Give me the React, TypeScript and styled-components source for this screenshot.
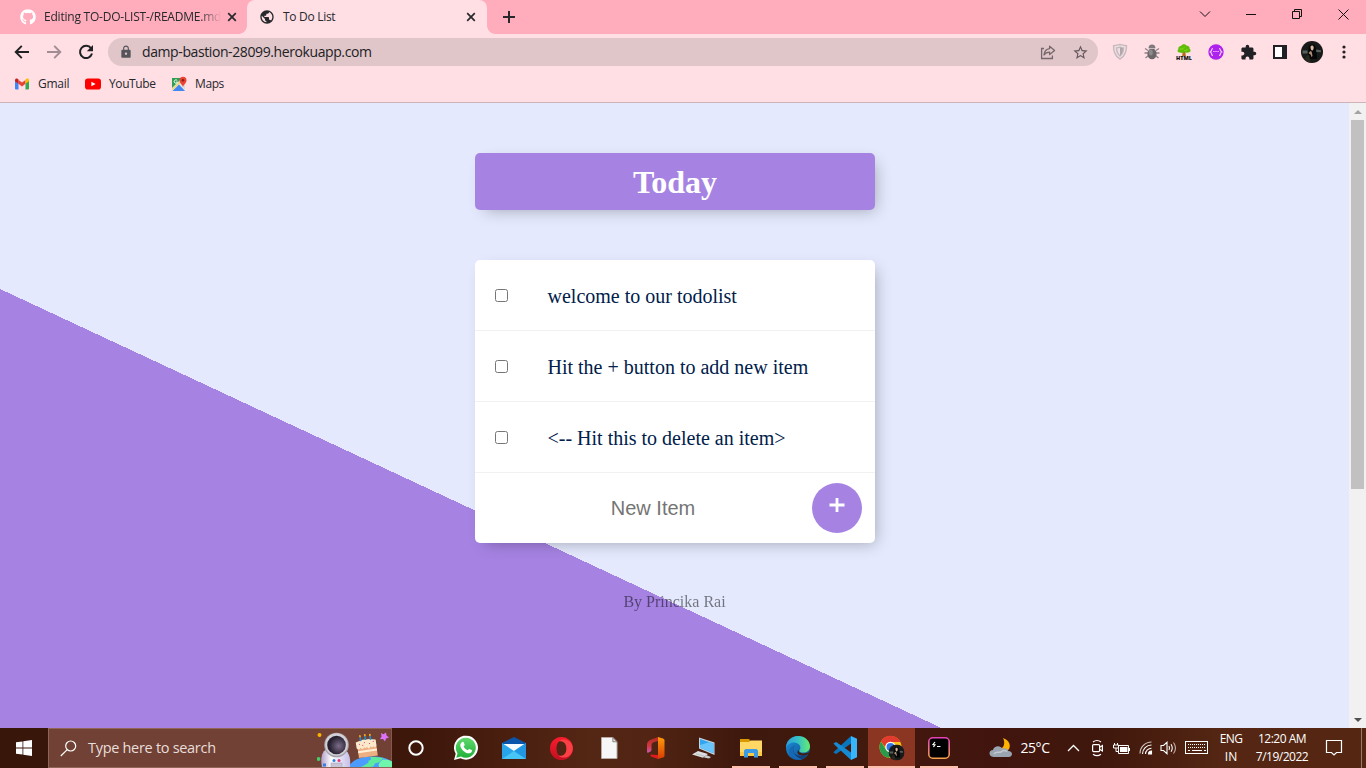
import React from "react";
import styled, { createGlobalStyle, css } from "styled-components";
import { MdExtension, MdLock, MdPublic, MdStarBorder } from "react-icons/md";
import { FaGithub } from "react-icons/fa";

const ui = `"Open Sans", "Noto Sans", sans-serif`;
const serif = `"Liberation Serif", "Times New Roman", serif`;

const GlobalStyle = createGlobalStyle`
  *, *::before, *::after { box-sizing: border-box; }
  body { margin: 0; overflow: hidden; }
  svg { display: block; flex: none; }
`;

const Screen = styled.div`
  width: 1366px;
  height: 768px;
  display: flex;
  flex-direction: column;
  overflow: hidden;
  font-family: ${ui};
`;

const Label = styled.span<{ $size?: number; $spacing?: number }>`
  font-size: ${(p) => p.$size ?? 12}px;
  letter-spacing: ${(p) => p.$spacing ?? 0}px;
  line-height: 18px;
  white-space: nowrap;
  flex: none;
`;

/* ---------- Browser: tab strip ---------- */

const TabStrip = styled.div`
  height: 34px;
  flex: none;
  display: flex;
  align-items: stretch;
  background: #ffadbc;
  color: #26282c;
`;

const Tab = styled.div<{ $active?: boolean }>`
  position: relative;
  display: flex;
  align-items: center;
  width: ${(p) => (p.$active ? 240 : 247)}px;
  padding: 0 ${(p) => (p.$active ? 8 : 7)}px 0 ${(p) => (p.$active ? 12 : 20)}px;
  ${(p) =>
    p.$active &&
    css`
      background: #ffdee4;
      border-radius: 8px 8px 0 0;
      &::before,
      &::after {
        content: "";
        position: absolute;
        bottom: 0;
        width: 8px;
        height: 8px;
      }
      &::before {
        left: -8px;
        background: radial-gradient(circle at 0 0, transparent 7.5px, #ffdee4 8px);
      }
      &::after {
        right: -8px;
        background: radial-gradient(circle at 100% 0, transparent 7.5px, #ffdee4 8px);
      }
    `}
`;

const TabTitle = styled.span<{ $fade?: boolean; $spacing: number }>`
  flex: 1;
  margin: 0 0 0 8px;
  white-space: nowrap;
  font-size: 12px;
  line-height: 18px;
  letter-spacing: ${(p) => p.$spacing}px;
  ${(p) => p.$fade && css`mask-image: linear-gradient(90deg, #000 156px, transparent 177px);`}
`;

const IconCell = styled.div<{ $w: number }>`
  width: ${(p) => p.$w}px;
  flex: none;
  display: flex;
  align-items: center;
  justify-content: center;
`;

const CaptionButtons = styled.div`
  display: flex;
  margin-left: auto;
  height: 28px;
  color: #111;
`;

/* ---------- Browser: toolbar and bookmarks ---------- */

const Toolbar = styled.div`
  height: 36px;
  flex: none;
  display: flex;
  align-items: center;
  padding: 0 6px;
  background: #ffdee4;
  color: #202124;
`;

const AddressBar = styled.div`
  width: 990px;
  height: 28px;
  margin: 0 6px;
  padding: 0 2px 0 11px;
  border-radius: 14px;
  display: flex;
  align-items: center;
  background: #e0c5c9;
`;

const AddressText = styled(Label)`
  flex: 1;
  margin-left: 9px;
`;

const Bookmarks = styled.div`
  height: 33px;
  flex: none;
  display: flex;
  align-items: flex-start;
  padding: 5px 14px;
  background: #ffdee4;
  border-bottom: 1px solid #ceb3b9;
  color: #26282c;
`;

const Bookmark = styled.div<{ $w: number }>`
  width: ${(p) => p.$w}px;
  display: flex;
  align-items: center;
  gap: 8px;
`;

/* ---------- Page ---------- */

const Viewport = styled.div`
  height: 625px;
  flex: none;
  display: flex;
`;

const Page = styled.main`
  width: 1349px;
  background: #e4e9fd linear-gradient(25deg, #a683e3 50%, #e4e9fd 50%) 0 0 / 1349px 1001px no-repeat;
  font-family: ${serif};
  overflow: hidden;
`;

const Box = styled.section`
  width: 400px;
  margin: 50px auto;
  border-radius: 5px;
  background: #fff;
  box-shadow: 5px 5px 15px -5px rgba(0, 0, 0, 0.3);
`;

const Heading = styled(Box)`
  height: 57px;
  padding: 11px 9px 9px 10px;
  background: #a683e3;
  text-align: center;
`;

const Title = styled.h1`
  margin: 0;
  font-size: 32px;
  line-height: 37px;
  color: #fff;
`;

const Item = styled.label`
  height: 71px;
  display: flex;
  align-items: center;
  border-bottom: 1px solid #f1f1f1;
`;

const Check = styled.input`
  width: 13px;
  height: 13px;
  margin: 20px;
`;

const ItemText = styled.p`
  margin: 0;
  padding: 21px 20px 19px 20px;
  font-size: 20px;
  line-height: 23px;
  color: #00204a;
`;

const NewItem = styled.form`
  height: 70px;
  display: flex;
  align-items: center;
`;

const NewItemInput = styled.input`
  width: 337px;
  height: 60px;
  padding: 0 0 0 20px;
  border: 0;
  outline: 0;
  background: transparent;
  text-align: center;
  font: 20px "Liberation Sans", Arial, sans-serif;
  &::placeholder { color: #757575; opacity: 1; }
`;

const AddButton = styled.button`
  width: 50px;
  height: 50px;
  border: 0;
  border-radius: 50%;
  padding: 0 0 6px;
  display: flex;
  align-items: center;
  justify-content: center;
  background: #a683e3;
  color: #fff;
`;

const Footer = styled.footer`
  text-align: center;
  font-size: 16px;
  line-height: 18px;
  color: #000;
  opacity: 0.5;
`;

const Scrollbar = styled.div`
  width: 17px;
  display: flex;
  flex-direction: column;
  align-items: center;
  background: #f1f1f1;
`;

const ScrollArrow = styled.div`
  height: 17px;
  display: flex;
  align-items: center;
`;

const ScrollThumb = styled.div`
  width: 13px;
  height: 369px;
  margin-bottom: auto;
  background: #c1c1c1;
`;

/* ---------- Taskbar ---------- */

const Taskbar = styled.div`
  height: 40px;
  flex: none;
  display: flex;
  background: linear-gradient(90deg, #39160a 0, #3e170b 420px, #542614 590px, #512413 650px, #3e180d 745px, #421a0d 850px, #41150e 990px, #3f170c 1100px, #542613 1220px, #552713 1366px);
  color: #fff;
`;

const SearchBox = styled.div`
  width: 344px;
  display: flex;
  align-items: center;
  padding-left: 11px;
  background: #704134;
  border: 1px solid #8e6558;
  border-right-color: #82594c;
  color: #e9dedb;
`;

const SearchLabel = styled(Label)`
  margin-left: 11px;
  width: 229px;
`;

const AppCell = styled.div<{ $w: number; $open?: boolean; $active?: boolean }>`
  width: ${(p) => p.$w}px;
  flex: none;
  display: flex;
  align-items: center;
  justify-content: center;
  ${(p) =>
    p.$open &&
    css`background: linear-gradient(#ffbfad, #ffbfad) center bottom / 38px 2px no-repeat;`}
  ${(p) =>
    p.$active &&
    css`background: linear-gradient(#ffbfad, #ffbfad) center bottom / 100% 2px no-repeat, #8b3523;`}
`;

const Tray = styled.div`
  margin-left: auto;
  width: 377px;
  display: flex;
  align-items: center;
`;

const Stack = styled.div<{ $w: number }>`
  width: ${(p) => p.$w}px;
  display: flex;
  flex-direction: column;
  align-items: center;
`;

const ShowDesktop = styled.div`
  width: 5px;
  height: 40px;
  margin-left: auto;
  border-left: 1px solid #967a6d;
`;

/* ---------- Icons ---------- */

const line = { fill: "none", stroke: "currentColor" } as const;

const CloseTab = () => (
  <svg width="16" height="16" {...line} strokeWidth="1.7">
    <path d="M4.2 4.2l7.6 7.6M11.8 4.2l-7.6 7.6" />
  </svg>
);
const PlusTab = () => (
  <svg width="16" height="16" {...line} strokeWidth="2">
    <path d="M8 2v12M2 8h12" />
  </svg>
);
const Arrow = ({ flip }: { flip?: boolean }) => (
  <svg width="16" height="16" {...line} strokeWidth="1.9" color={flip ? "#a38d94" : "#202124"}>
    <path d={flip ? "M1 8h13M8.2 1.9L14.3 8l-6.1 6.1" : "M15 8H2M7.8 1.9L1.7 8l6.1 6.1"} />
  </svg>
);
const Reload = () => (
  <svg width="16" height="16">
    <path d="M13.1 4.4A6.1 6.1 0 1 0 14 9.6" {...line} strokeWidth="2" />
    <path d="M15 1v6.2H8.8z" fill="currentColor" />
  </svg>
);
const Share = () => (
  <svg width="16" height="16" {...line} strokeWidth="1.3" color="#75686d">
    <path d="M4 4.5H1.6v10h10.8v-3" />
    <path d="M9.6 2.2l5 4.2-5 4.2V8.2C7 8.2 5.3 9 4 11c.3-3.4 2.1-6 5.600-6.400z" strokeLinejoin="round" />
  </svg>
);
const Shield = () => (
  <svg width="16" height="18" fill="none" stroke="#c5b9bd" strokeWidth="1.4">
    <path d="M1.5 2.8C5 2.5 6.5 1.7 8 1.5c1.5.2 3 1 6.5 1.300.1 6.200-1.800 10.600-6.500 13.400C3.300 13.400 1.400 9 1.500 2.800z" fill="#f0dfe3" />
    <path d="M4.500 5c1.500-.1 2.500-.4 3.500-.8 1 .4 2 .7 3.500.8-.1 4-1.200 6-3.500 8-2.300-2-3.400-4-3.500-8z" />
    <path d="M8 4.500V13c2-1.800 3-4 3-7.700z" fill="#b1a7aa" stroke="none" />
  </svg>
);
const Bug = () => (
  <svg width="16" height="16">
    <path d="M1 4.500l3 2M15 4.500l-3 2M.5 9h4M15.500 9h-4M1.500 14l3-2.500M14.500 14l-3-2.500" fill="none" stroke="#8e8386" strokeWidth="1.3" />
    <ellipse cx="8" cy="9.8" rx="4.6" ry="5.5" fill="#6b6668" />
    <ellipse cx="6.8" cy="8.5" rx="2" ry="3" fill="#8e898b" />
    <path d="M4.500 4.200C4.600 1.600 6 .5 8 .5s3.400 1.100 3.500 3.700z" fill="#807a7c" />
    <path d="M5 4.500h6" stroke="#c5bdc0" />
  </svg>
);
const HtmlTree = () => (
  <svg width="16" height="17" viewBox="0 0 16 17">
    <path d="M6.800 7h2.400l.6 5H6.200z" fill="#b16b17" />
    <path d="M4 8.500C1.500 8.800.8 6.500 2.400 5.300 1.800 3 3.800 1.700 5 2 6-.2 9.500-.3 10.700 1.800c2-.4 3.400 1.400 2.800 3 2 1.200 1 3.900-1.500 3.700-1.500.6-2.500.3-3.500-.5C7 9 5.500 9.200 4 8.500z" fill="#5fbd08" />
    <path d="M4 5c2 .8 3-.4 4.500-1.800M8.500 6.500c1.500 0 2.500-.5 3-1.500" stroke="#8be01a" fill="none" />
    <text x="0" y="16" textLength="16" lengthAdjust="spacingAndGlyphs" fontFamily="Open Sans, sans-serif" fontWeight="800" fontSize="5" fill="#111">HTML</text>
  </svg>
);
const PurpleBadge = () => (
  <svg width="16" height="16" fill="none" stroke="#f3d5ff" strokeWidth="1.2">
    <circle cx="8" cy="8" r="7.700" fill="#ae22ee" stroke="none" />
    <path d="M5 4.500c-2 0-.7 2.500-2.700 3.500 2 1 .7 3.500 2.700 3.500M11 4.500c2 0 .7 2.500 2.700 3.500-2 1-.7 3.500-2.700 3.500" />
    <path d="M5.300 7.500h1.200M7.400 7.500h1.200M9.500 7.500h1.200" />
  </svg>
);
const SidePanel = () => (
  <svg width="14" height="14">
    <path d="M1 1h12v12H1z" {...line} strokeWidth="2" />
    <path d="M9 0h5v14H9z" fill="currentColor" />
    <path d="M2 2h7v10H2z" fill="#fff" />
  </svg>
);
const Avatar = ({ size }: { size: number }) => (
  <svg width={size} height={size} viewBox="0 0 22 22">
    <circle cx="11" cy="11" r="11" fill="#171a18" />
    <path d="M1.500 9.500h5v3h-5zM15 8.500l5 .8v2l-5-.3z" fill="#555f5b" />
    <path d="M7.500 7.200C7.500 2.500 14.500 2 14.800 7c.3 4 1.500 7 1.300 11H7c-.5-4 .5-7 .5-10.800z" fill="#050607" />
    <path d="M9.500 5.500c1-1.500 3-1 3.200.8.1 2-.6 3.200-1.500 3.300-1 .1-1.800-2-1.700-4.100z" fill="#d9b9a0" />
    <path d="M7.500 12l2-2 1.200.8.8 4-.8 1.500-1-2.500z" fill="#b08f77" />
    <path d="M4 18c1-3 2-4 4-4l2 7.800C7.500 21.800 5.300 20 4 18z" fill="#29281e" />
  </svg>
);
const Dots = () => (
  <svg width="4" height="14" fill="#202124">
    <circle cx="2" cy="2" r="1.600" /><circle cx="2" cy="7" r="1.600" /><circle cx="2" cy="12" r="1.600" />
  </svg>
);
const Gmail = () => (
  <svg width="16" height="12" viewBox="0 0 16 12">
    <path d="M1 2.200L4.500 4.800V11.500H2a1 1 0 0 1-1-1z" fill="#4285f4" />
    <path d="M11.500 4.800L15 2.200v8.300a1 1 0 0 1-1 1h-2.500z" fill="#34a853" />
    <path d="M4.500 1.900L8 4.600l3.500-2.700v3.900L8 8.500 4.500 5.800z" fill="#ea4335" />
    <path d="M1 2.200C1 .7 2.600 0 3.800.9l.7.6v4.300L1 3.200z" fill="#c5221f" />
    <path d="M15 2.200C15 .7 13.400 0 12.200.9l-.7.6v4.300L15 3.200z" fill="#fbbc04" />
  </svg>
);
const YouTube = () => (
  <svg width="16" height="12"><rect y=".5" width="16" height="11" rx="2.800" fill="#f00" /><path d="M6.400 3.700L10.600 6l-4.200 2.300z" fill="#fff" /></svg>
);
const Maps = () => (
  <svg width="15" height="16">
    <path d="M0 2h13v13H0z" fill="#e5e4df" />
    <path d="M0 2h10L0 12z" fill="#2f9e50" />
    <path d="M7 8.500L13 15H.5z" fill="#4285f4" />
    <path d="M.5 13.500L11 3" stroke="#f6d35a" strokeWidth="1.300" />
    <path d="M9.500 8.500l3.500 5V7z" fill="#dad9d4" />
    <path d="M11 11C10.300 8.500 7.500 7.300 7.500 4.300a3.500 3.500 0 0 1 7 0c0 3-2.800 4.200-3.500 6.700z" fill="#ea4335" />
    <circle cx="11" cy="4.200" r="1.300" fill="#8e1d16" />
    <path d="M5.300 4.600a1.700 1.700 0 1 0 .2 1.500H4" fill="none" stroke="#fff" strokeWidth=".9" />
  </svg>
);

const WindowsLogo = () => (
  <svg width="16" height="16" fill="#fff"><path d="M0 2.300L6.500 1.400v6.200H0zM7.300 1.300L16 0v7.600H7.300zM0 8.400h6.500v6.200L0 13.700zM7.300 8.400H16V16l-8.700-1.300z" /></svg>
);
const SearchIcon = () => (
  <svg width="17" height="17" fill="none" stroke="#fff" strokeWidth="1.200"><circle cx="10.700" cy="6" r="5" /><path d="M7.200 9.600L.8 16" /></svg>
);
const Astronaut = () => (
  <svg width="75" height="38" viewBox="0 0 75 38">
    <defs>
      <linearGradient id="suit"><stop stopColor="#b3a0cc" /><stop offset=".35" stopColor="#fff" /><stop offset="1" stopColor="#c6bee9" /></linearGradient>
      <radialGradient id="visor" cx=".62" cy=".55"><stop stopColor="#7c6d8b" /><stop offset="1" stopColor="#27212f" /></radialGradient>
    </defs>
    <path d="M32 38c2-6 10-10 21-10.500 9-.5 17 1.500 22 5V38z" fill="#4c9bff" />
    <path d="M53 28c6 0 11 0 14 1.500-5 1.500-2 4-8 4.500-3 1 0 4-6 4H44c5-3 9-4 7-6 3-1 4-2 2-4z" fill="#5dea9c" />
    <path d="M65 31c4-1 7 0 10 1.500V38H62c-1-3 0-4 3-7z" fill="#70f5ac" />
    <path d="M5 38c-2-9 0-17 6-18h15c6 2 8 9 7 18z" fill="url(#suit)" />
    <circle cx="19.500" cy="16" r="12.300" fill="#a3a0a9" />
    <circle cx="19.500" cy="15.500" r="11.300" fill="#d2cfd6" />
    <circle cx="19.500" cy="16" r="9.300" fill="url(#visor)" />
    <rect x="14" y="34" width="11" height="5" fill="#c7c4d7" stroke="#a9a5bd" strokeWidth=".6" />
    <circle cx="17" cy="31.500" r="1.500" fill="#2f81df" /><circle cx="22" cy="31.500" r="1.500" fill="#e93672" />
    <path d="M6 34.500h3v3H6z" fill="#2f81df" />
    <circle cx="2.500" cy="6" r="2" fill="#ffb100" /><circle cx="1.500" cy="30" r="1.900" fill="#42cf6a" />
    <g transform="rotate(-8 49 18) translate(.5 1)">
      <path d="M40 12h19v15H40z" fill="#eeb083" />
      <path d="M40 20h19v2H40z" fill="#fff0da" />
      <path d="M39 11q10-3.500 20 0v6q-1.500 3-3 0-1.500 2-3 0-2 4-3.500 0-1.500 2-3 0-1.500 3-3.500 0-2 3-4 0z" fill="#fbe9cc" />
      <path d="M44 6.500v4M49 6v4M54 6.500v4" stroke="#258ccc" strokeWidth="1.600" />
      <path d="M44 4.500v2M49 4v2M54 4.500v2" stroke="#ffb11b" strokeWidth="1.600" />
      <path d="M42 13.500h1M47 12.500h1M52 14h1M56 12.500h1M45 15h1" stroke="#e8456e" />
    </g>
    <path d="M64 4l2.500 1.200L69 3.500l.5 3 2.500 2-3 1-1 3-2-2.500-3 .3 1.500-2.800z" fill="#dd71fb" />
  </svg>
);
const Cortana = () => (
  <svg width="18" height="18"><circle cx="8" cy="9" r="6.700" fill="none" stroke="#fff" strokeWidth="2" /></svg>
);
const WhatsApp = () => (
  <svg width="26" height="26" viewBox="0 0 26 26">
    <defs><linearGradient id="wa" x2="0" y2="1"><stop stopColor="#61d86e" /><stop offset="1" stopColor="#20b038" /></linearGradient></defs>
    <path d="M1 25l1.700-6.200A12 12 0 1 1 7.500 23.300z" fill="#fff" />
    <path d="M3.300 22.700l1.200-4.400A10 10 0 1 1 8 21.500z" fill="url(#wa)" />
    <path d="M9.200 7c.5-.4 1.300-.3 1.500.3l1 2.400c.1.500-.8 1.400-1.100 1.800.9 1.800 2.300 3 4 3.800.5-.5 1.300-1.600 1.700-1.400l2.500 1.200c.7.400-.1 2.500-1.500 3-4 1.500-9.800-4-10-7.700-.1-1.500.9-2.700 1.900-3.400z" fill="#fff" />
  </svg>
);
const Mail = () => (
  <svg width="24" height="22"><path d="M0 6L12 0l12 6v6H0z" fill="#0a55ab" /><path d="M2 7h20v9H2z" fill="#f7fbff" /><path d="M0 6l12 8L24 6v16H0z" fill="#28a5ea" /><path d="M0 22L12 14 24 22z" fill="#46c5f6" /><path d="M12 14L24 6v16z" fill="#1c8dde" opacity=".6" /></svg>
);
const Opera = () => (
  <svg width="23" height="23" viewBox="0 0 23 23">
    <defs><linearGradient id="op" x2="0" y2="1"><stop stopColor="#ff1b2d" /><stop offset="1" stopColor="#c01022" /></linearGradient></defs>
    <path fillRule="evenodd" d="M11.500 0a11.500 11.500 0 1 0 0 23 11.500 11.500 0 1 0 0-23zm0 3.500c2.800 0 5 3.500 5 8s-2.200 8-5 8-5-3.500-5-8 2.200-8 5-8z" fill="url(#op)" />
    <path d="M8 4.500c5-4 10.500-1.500 12.500.8 3 3.800 3 8.700 0 12.400-2 2.300-7.500 4.800-12.500.8 5 1.500 8.500-2 8.500-7s-3.500-8.500-8.500-7z" fill="#fa4045" />
  </svg>
);
const FileIcon = () => (
  <svg width="17" height="22"><path d="M.5.5h11.300l4.200 4.200V21.500H.5z" fill="#f7f7f7" stroke="#b5a9a4" /><path d="M11.800.5v4.300H16z" fill="#ddd" stroke="#77706d" strokeWidth=".8" /></svg>
);
const Office = () => (
  <svg width="18" height="22" viewBox="0 0 18 22">
    <defs><linearGradient id="of1" x2="0" y2="1"><stop stopColor="#b02a1c" /><stop offset=".6" stopColor="#d23a49" /><stop offset="1" stopColor="#ca5ab4" /></linearGradient><linearGradient id="of2" x2="0" y2="1"><stop stopColor="#ff9b0b" /><stop offset="1" stopColor="#d83b01" /></linearGradient></defs>
    <path d="M11 0L3 3Q0 4.500 0 7v7.500q.2 1.800 1.500 1l2-1q1-.6 1-2V8q0-2 2-2.800L11 4z" fill="url(#of1)" />
    <path d="M4 17.500L11 18v4l-7-2.500q-1.500-1.300 0-2z" fill="#dd1d1d" />
    <path d="M11 0l5 1.400q1.500.5 1.500 2.200v14.800q0 1.700-1.500 2.200L11 22z" fill="url(#of2)" />
  </svg>
);
const RemotePc = () => (
  <svg width="23" height="22"><path d="M7 .5l15.500 5V18L7 11.500z" fill="#c9d4dd" /><path d="M8 2l13.500 4.500v9.800L8 10.800z" fill="#32a5ef" /><path d="M8 8l10-3 3.500 2v9L8 10.800z" fill="#69c4fb" /><path d="M6 14l10 3-5 3.800L0 17.500z" fill="#dcdedf" /><path d="M4 16.800l8 2.300" stroke="#a4abb0" fill="none" strokeWidth=".6" /><path d="M14 18l5 2-2 1.500-5-1z" fill="#c8ced2" /></svg>
);
const Explorer = () => (
  <svg width="22" height="19"><path d="M0 0h9l1 1.500V5H0z" fill="#d99800" /><path d="M0 3h9l1.500-1.500H22V17H0z" fill="#ffd765" /><path d="M0 13h22v4H0z" fill="#fbc944" /><path d="M4 18.500V11.500L5.500 10h11l1.500 1.500v7h-4V14H8v4.500z" fill="#3b9be5" /></svg>
);
const Edge = () => (
  <svg width="24" height="24" viewBox="0 0 24 24">
    <defs><linearGradient id="ed1"><stop stopColor="#2d9ddd" /><stop offset=".5" stopColor="#35c1c5" /><stop offset="1" stopColor="#66eb6e" /></linearGradient><linearGradient id="ed2" x2="1" y2="1"><stop stopColor="#1a93dc" /><stop offset="1" stopColor="#114a8b" /></linearGradient></defs>
    <circle cx="12" cy="12" r="12" fill="url(#ed2)" />
    <path d="M0 12C0 5.200 5.300 0 12 0c7 0 12 5 12 10.400 0 3.900-3.200 6.200-6.500 6.200-3.100 0-4.600-1.200-4.100-2.200 3-4-1-7.900-5.400-7.900C4 6.500.6 9 0 12z" fill="url(#ed1)" />
    <path d="M8.800 9.600C5.200 13.500 8 20 14.500 20c3.500 0 5.800-1 8-3.500C20 21 16 24 12 24 5 24 2 16.500 8.800 9.600z" fill="#123f7c" />
    <path d="M13 14c-1.500 2.500 3.500 5 10.500 2.300l.5 1-4 1.700c-7 2-11-2.700-7-5z" fill="#431a0d" />
    <path d="M8.800 9.600C5.200 13.500 8 21 16 23.200 8 26 1 19 3.500 13.500c1-2.300 3-3.700 5.300-3.900z" fill="#1768b4" />
  </svg>
);
const VSCode = () => (
  <svg width="24" height="24" viewBox="0 0 24 24"><path d="M1.500 15.200L18 0v7.400L3.200 18 .5 16.700z" fill="#0875bd" /><path d="M1.500 8.800L18 24v-7.400L3.200 6 .5 7.300z" fill="#168ad3" /><path d="M18 0l6 2.800V21.200L18 24z" fill="#38b5fb" /></svg>
);
const ChromeProfile = () => (
  <svg width="26" height="26" viewBox="0 0 26 26">
    <circle cx="11.500" cy="12" r="11" fill="#fbc116" />
    <path d="M2 6.500A11 11 0 0 1 21.500 7H11.500a5 5 0 0 0-4.700 3.300L6 12z" fill="#e33b2e" />
    <path d="M2 6.500l5 8.200a5 5 0 0 0 5.500 2.200L10 23A11 11 0 0 1 2 6.500z" fill="#299a4a" />
    <circle cx="11.500" cy="12" r="5.200" fill="#fff" /><circle cx="11.500" cy="12" r="4" fill="#3278e8" />
    <g transform="translate(9.500 9.500)"><Avatar size={16} /></g>
  </svg>
);
const Terminal = () => (
  <svg width="22" height="22">
    <defs><linearGradient id="tm" x2="0" y2="1"><stop stopColor="#e543b8" /><stop offset="1" stopColor="#f5a04d" /></linearGradient></defs>
    <rect x=".8" y=".8" width="20.4" height="20.4" rx="4" fill="#000" stroke="url(#tm)" strokeWidth="1.6" />
    <path d="M7 5L5 7.500l2 .3L5.500 10M9 9.500h3.500" stroke="#fff" strokeWidth="1.200" fill="none" />
  </svg>
);
const Weather = () => (
  <svg width="24" height="20" viewBox="0 0 24 20">
    <path d="M14 0c6 2 8 7 6 11-2 3-7 3-9 0 4-1 5.500-6 3-11z" fill="#ffb300" />
    <path d="M4.500 19C-1 18.500-.5 12 4 12c1-4.500 7.500-5 9.500-1.200C17 9.500 19 11 19.200 13c5 0 5 6 .5 6z" fill="#9ba4b1" />
    <path d="M5 16c2-3 5-1 7-2 2-2 4-2 6-.5" stroke="#c5c9cf" strokeWidth="1.500" fill="none" />
  </svg>
);
const ChevronUp = () => (
  <svg width="13" height="8" {...line} strokeWidth="1.3"><path d="M1 7l5.500-5.500L12 7" /></svg>
);
const MeetNow = () => (
  <svg width="14" height="18" {...line} strokeWidth="1.2"><rect x="1.6" y="5.6" width="7" height="7" rx="1" /><path d="M8.600 8.200L11.400 6.500v5.500L8.600 10.300M2 3q4-3 8 0M2 15.200q4 3 8 0" /></svg>
);
const Battery = () => (
  <svg width="17" height="13"><path d="M5.500 3.500h10v8h-10z" {...line} /><path d="M7 5h7.500v5H7z" fill="#fff" /><path d="M16 6h1v3h-1z" fill="#fff" /><path d="M1.500 1v2M4.500 1v2M.5 3h5v3h-5zM3 6v3.500h3" {...line} /></svg>
);
const Wifi = () => (
  <svg width="14" height="14" {...line} strokeWidth="1.1"><path d="M1 12.500A11.500 11.500 0 0 1 12.500 1" opacity=".75" /><path d="M3.500 13A9 9 0 0 1 12.500 4M6.500 13a6 6 0 0 1 6-5.800" /><path d="M9.500 13a3 3 0 0 1 3-3v3z" fill="currentColor" /></svg>
);
const Volume = () => (
  <svg width="17" height="14" {...line} strokeWidth="1.1"><path d="M1 4.500h2.500L7 1.300v11.400L3.500 9.500H1zM9 5q1 2 0 4M11 3.200q2.500 3.800 0 7.600" /><path d="M13.500 1.500q4 5.500 0 11" opacity=".65" /></svg>
);
const Keyboard = () => (
  <svg width="24" height="14" {...line}><rect x=".5" y=".5" width="22" height="12" /><path d="M3 3.500h18M3 6.500h18" strokeDasharray="1 1" /><path d="M3 9.500h2M7 9.500h10M19 9.500h2" /></svg>
);
const Notification = () => (
  <svg width="18" height="18" {...line} strokeWidth="1.2"><path d="M1.500 1.500h15v12H11.500L9 16 6.500 13.500h-5z" /></svg>
);
const AddPlus = () => (
  <svg width="16" height="16" stroke="#fff" strokeWidth="2.800"><path d="M8 1v14M.5 8h15" /></svg>
);

const todos = [
  "welcome to our todolist",
  "Hit the + button to add new item",
  "<-- Hit this to delete an item>",
];

export default function App() {
  return (
    <Screen>
      <GlobalStyle />
      <TabStrip>
        <Tab>
          <FaGithub size={16} color="#fff" />
          <TabTitle $fade $spacing={-0.22}>Editing TO-DO-LIST-/README.md</TabTitle>
          <CloseTab />
        </Tab>
        <Tab $active>
          <MdPublic size={16} />
          <TabTitle $spacing={-0.3}>To Do List</TabTitle>
          <CloseTab />
        </Tab>
        <IconCell $w={44}><PlusTab /></IconCell>
        <CaptionButtons>
          <IconCell $w={46}><svg width="12" height="8" {...line}><path d="M1 1.500l5 5 5-5" /></svg></IconCell>
          <IconCell $w={46}><svg width="10" height="2"><path d="M0 1.5h10" stroke="#111" /></svg></IconCell>
          <IconCell $w={46}><svg width="10" height="10" {...line}><path d="M.5 2.500h7v7h-7zM2.500 2.500v-2h7v7h-2" /></svg></IconCell>
          <IconCell $w={46}><svg width="11" height="11" {...line}><path d="M.5.5l10 10M10.500.5l-10 10" /></svg></IconCell>
        </CaptionButtons>
      </TabStrip>
      <Toolbar>
        <IconCell $w={32}><Arrow /></IconCell>
        <IconCell $w={32}><Arrow flip /></IconCell>
        <IconCell $w={32}><Reload /></IconCell>
        <AddressBar>
          <MdLock size={14} color="#55555b" />
          <AddressText $size={14} $spacing={-0.4}>damp-bastion-28099.herokuapp.com</AddressText>
          <IconCell $w={32}><Share /></IconCell>
          <IconCell $w={32}><MdStarBorder size={17} color="#65595e" /></IconCell>
        </AddressBar>
        <IconCell $w={32}><Shield /></IconCell>
        <IconCell $w={32}><Bug /></IconCell>
        <IconCell $w={32}><HtmlTree /></IconCell>
        <IconCell $w={32}><PurpleBadge /></IconCell>
        <IconCell $w={32}><MdExtension size={17} /></IconCell>
        <IconCell $w={32}><SidePanel /></IconCell>
        <IconCell $w={32}><Avatar size={22} /></IconCell>
        <IconCell $w={32}><Dots /></IconCell>
      </Toolbar>
      <Bookmarks>
        <Bookmark $w={71}><Gmail /><Label $spacing={-0.25}>Gmail</Label></Bookmark>
        <Bookmark $w={87}><YouTube /><Label $spacing={-0.4}>YouTube</Label></Bookmark>
        <Bookmark $w={60}><Maps /><Label $spacing={-0.4}>Maps</Label></Bookmark>
      </Bookmarks>
      <Viewport>
        <Page>
          <Heading><Title>Today</Title></Heading>
          <Box>
            {todos.map((text) => (
              <Item key={text}><Check type="checkbox" /><ItemText>{text}</ItemText></Item>
            ))}
            <NewItem>
              <NewItemInput type="text" placeholder="New Item" />
              <AddButton type="button" aria-label="Add item"><AddPlus /></AddButton>
            </NewItem>
          </Box>
          <Footer>By Princika Rai</Footer>
        </Page>
        <Scrollbar>
          <ScrollArrow><svg width="8" height="4" fill="#a3a3a3"><path d="M4 0l4 4H0z" /></svg></ScrollArrow>
          <ScrollThumb />
          <ScrollArrow><svg width="8" height="4" fill="#505050"><path d="M4 4L0 0h8z" /></svg></ScrollArrow>
        </Scrollbar>
      </Viewport>
      <Taskbar>
        <AppCell $w={48}><WindowsLogo /></AppCell>
        <SearchBox><SearchIcon /><SearchLabel $size={14.5} $spacing={-0.3}>Type here to search</SearchLabel><Astronaut /></SearchBox>
        <AppCell $w={50}><Cortana /></AppCell>
        <AppCell $w={48}><WhatsApp /></AppCell>
        <AppCell $w={48}><Mail /></AppCell>
        <AppCell $w={47}><Opera /></AppCell>
        <AppCell $w={48}><FileIcon /></AppCell>
        <AppCell $w={46}><Office /></AppCell>
        <AppCell $w={49}><RemotePc /></AppCell>
        <AppCell $w={46} $open><Explorer /></AppCell>
        <AppCell $w={48} $open><Edge /></AppCell>
        <AppCell $w={46} $open><VSCode /></AppCell>
        <AppCell $w={47} $active><ChromeProfile /></AppCell>
        <AppCell $w={48} $open><Terminal /></AppCell>
        <Tray>
          <Weather />
          <IconCell $w={44}><Label $size={14} $spacing={-0.4}>25°C</Label></IconCell>
          <IconCell $w={32}><ChevronUp /></IconCell>
          <IconCell $w={17}><MeetNow /></IconCell>
          <IconCell $w={30}><Battery /></IconCell>
          <IconCell $w={20}><Wifi /></IconCell>
          <IconCell $w={25}><Volume /></IconCell>
          <IconCell $w={32}><Keyboard /></IconCell>
          <Stack $w={36}><Label $spacing={-0.6}>ENG</Label><Label>IN</Label></Stack>
          <Stack $w={66}><Label $spacing={-0.5}>12:20 AM</Label><Label $spacing={-0.5}>7/19/2022</Label></Stack>
          <IconCell $w={38}><Notification /></IconCell>
          <ShowDesktop />
        </Tray>
      </Taskbar>
    </Screen>
  );
}
